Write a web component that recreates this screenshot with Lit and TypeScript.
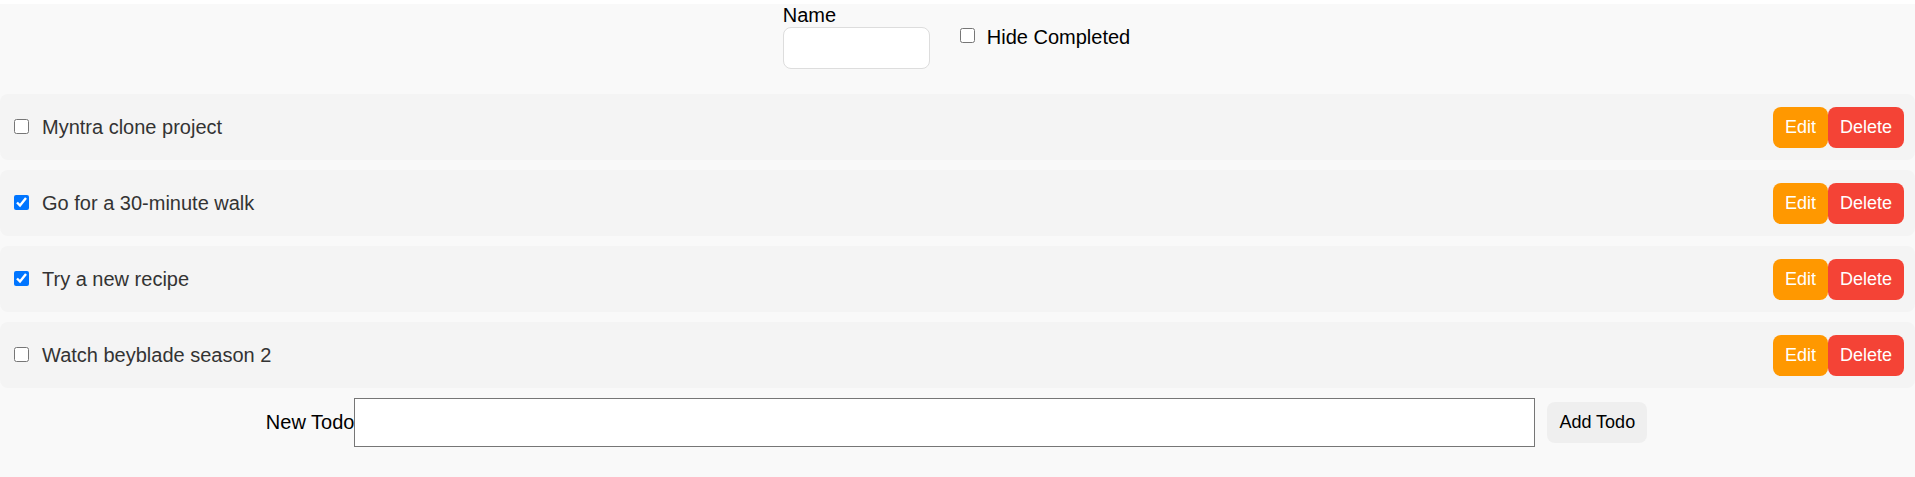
import { LitElement, html, css } from "lit";
import { customElement, state } from "lit/decorators.js";

interface Todo {
  id: number;
  name: string;
  completed: boolean;
}

@customElement("app-root")
export class AppRoot extends LitElement {
  static styles = css`
    :host {
      display: block;
      box-sizing: border-box;
      min-height: 100vh;
      border-top: 4px solid #fff;
      background: #f9f9f9;
      color: #000;
      font: 20px/23px "Liberation Sans", Arial, sans-serif;
    }
    .filter {
      display: flex;
      justify-content: center;
      gap: 30px;
      height: 90px;
      padding-right: 2px;
    }
    .name-group {
      display: flex;
      flex-direction: column;
      align-items: flex-start;
    }
    .name {
      box-sizing: border-box;
      width: 147px;
      height: 42px;
      padding: 10px;
      border: 1px solid #ddd;
      border-radius: 8px;
      font: inherit;
    }
    .toggle {
      display: flex;
      align-items: flex-start;
      gap: 12px;
      padding-top: 22px;
    }
    .check {
      width: 15px;
      height: 15px;
      margin: 0 0 2px;
      flex: none;
    }
    .toggle .check {
      margin-top: 2px;
    }
    .list {
      display: flex;
      flex-direction: column;
      gap: 10px;
      margin: 0;
      padding: 0;
      list-style: none;
    }
    .item {
      display: flex;
      align-items: center;
      justify-content: space-between;
      padding: 13px 11px 12px 14px;
      border-radius: 8px;
      background: #f4f4f4;
    }
    .item-label {
      display: flex;
      align-items: center;
      gap: 13px;
      color: #333;
    }
    .actions {
      display: flex;
    }
    .button {
      padding: 10px 12px;
      border: none;
      border-radius: 8px;
      background: #efefef;
      color: #000;
      font: 18px/21px "Liberation Sans", Arial, sans-serif;
      cursor: pointer;
    }
    .edit {
      background: #ff9800;
      color: #fff;
    }
    .delete {
      background: #f44336;
      color: #fff;
    }
    .new-form {
      display: flex;
      align-items: center;
      justify-content: center;
      padding: 10px 0 30px;
    }
    .new-input {
      width: 60%;
      height: 23px;
      padding: 12px 15px;
      border: 1px solid #767676;
      border-radius: 0;
      font: inherit;
    }
    .new-form .button {
      margin: 0 2px 0 12px;
    }
  `;

  @state() private hideCompleted = false;
  @state() private query = "";
  @state() private draft = "";
  @state() private todos: Todo[] = [
    { id: 1, name: "Myntra clone project", completed: false },
    { id: 2, name: "Go for a 30-minute walk", completed: true },
    { id: 3, name: "Try a new recipe", completed: true },
    { id: 4, name: "Watch beyblade season 2", completed: false },
  ];

  private toggle(id: number) {
    this.todos = this.todos.map((t) => (t.id === id ? { ...t, completed: !t.completed } : t));
  }

  private remove(id: number) {
    this.todos = this.todos.filter((t) => t.id !== id);
  }

  private edit(todo: Todo) {
    const name = window.prompt("Name", todo.name);
    if (name) this.todos = this.todos.map((t) => (t.id === todo.id ? { ...t, name } : t));
  }

  private add(e: Event) {
    e.preventDefault();
    if (!this.draft) return;
    this.todos = [...this.todos, { id: Date.now(), name: this.draft, completed: false }];
    this.draft = "";
  }

  render() {
    const visible = this.todos.filter(
      (t) => !(this.hideCompleted && t.completed) && t.name.toLowerCase().includes(this.query.toLowerCase())
    );
    return html`
      <div class="filter">
        <div class="name-group">
          <label for="name">Name</label>
          <input
            class="name"
            id="name"
            type="text"
            .value=${this.query}
            @input=${(e: Event) => (this.query = (e.target as HTMLInputElement).value)}
          />
        </div>
        <label class="toggle">
          <input
            class="check"
            type="checkbox"
            .checked=${this.hideCompleted}
            @change=${() => (this.hideCompleted = !this.hideCompleted)}
          />
          <span>Hide Completed</span>
        </label>
      </div>
      <ul class="list">
        ${visible.map(
          (t) => html`
            <li class="item">
              <label class="item-label">
                <input class="check" type="checkbox" .checked=${t.completed} @change=${() => this.toggle(t.id)} />
                <span>${t.name}</span>
              </label>
              <div class="actions">
                <button class="button edit" type="button" @click=${() => this.edit(t)}>Edit</button>
                <button class="button delete" type="button" @click=${() => this.remove(t.id)}>Delete</button>
              </div>
            </li>
          `
        )}
      </ul>
      <form class="new-form" @submit=${this.add}>
        <label for="todo">New Todo</label>
        <input
          class="new-input"
          id="todo"
          type="text"
          .value=${this.draft}
          @input=${(e: Event) => (this.draft = (e.target as HTMLInputElement).value)}
        />
        <button class="button" type="submit">Add Todo</button>
      </form>
    `;
  }
}
